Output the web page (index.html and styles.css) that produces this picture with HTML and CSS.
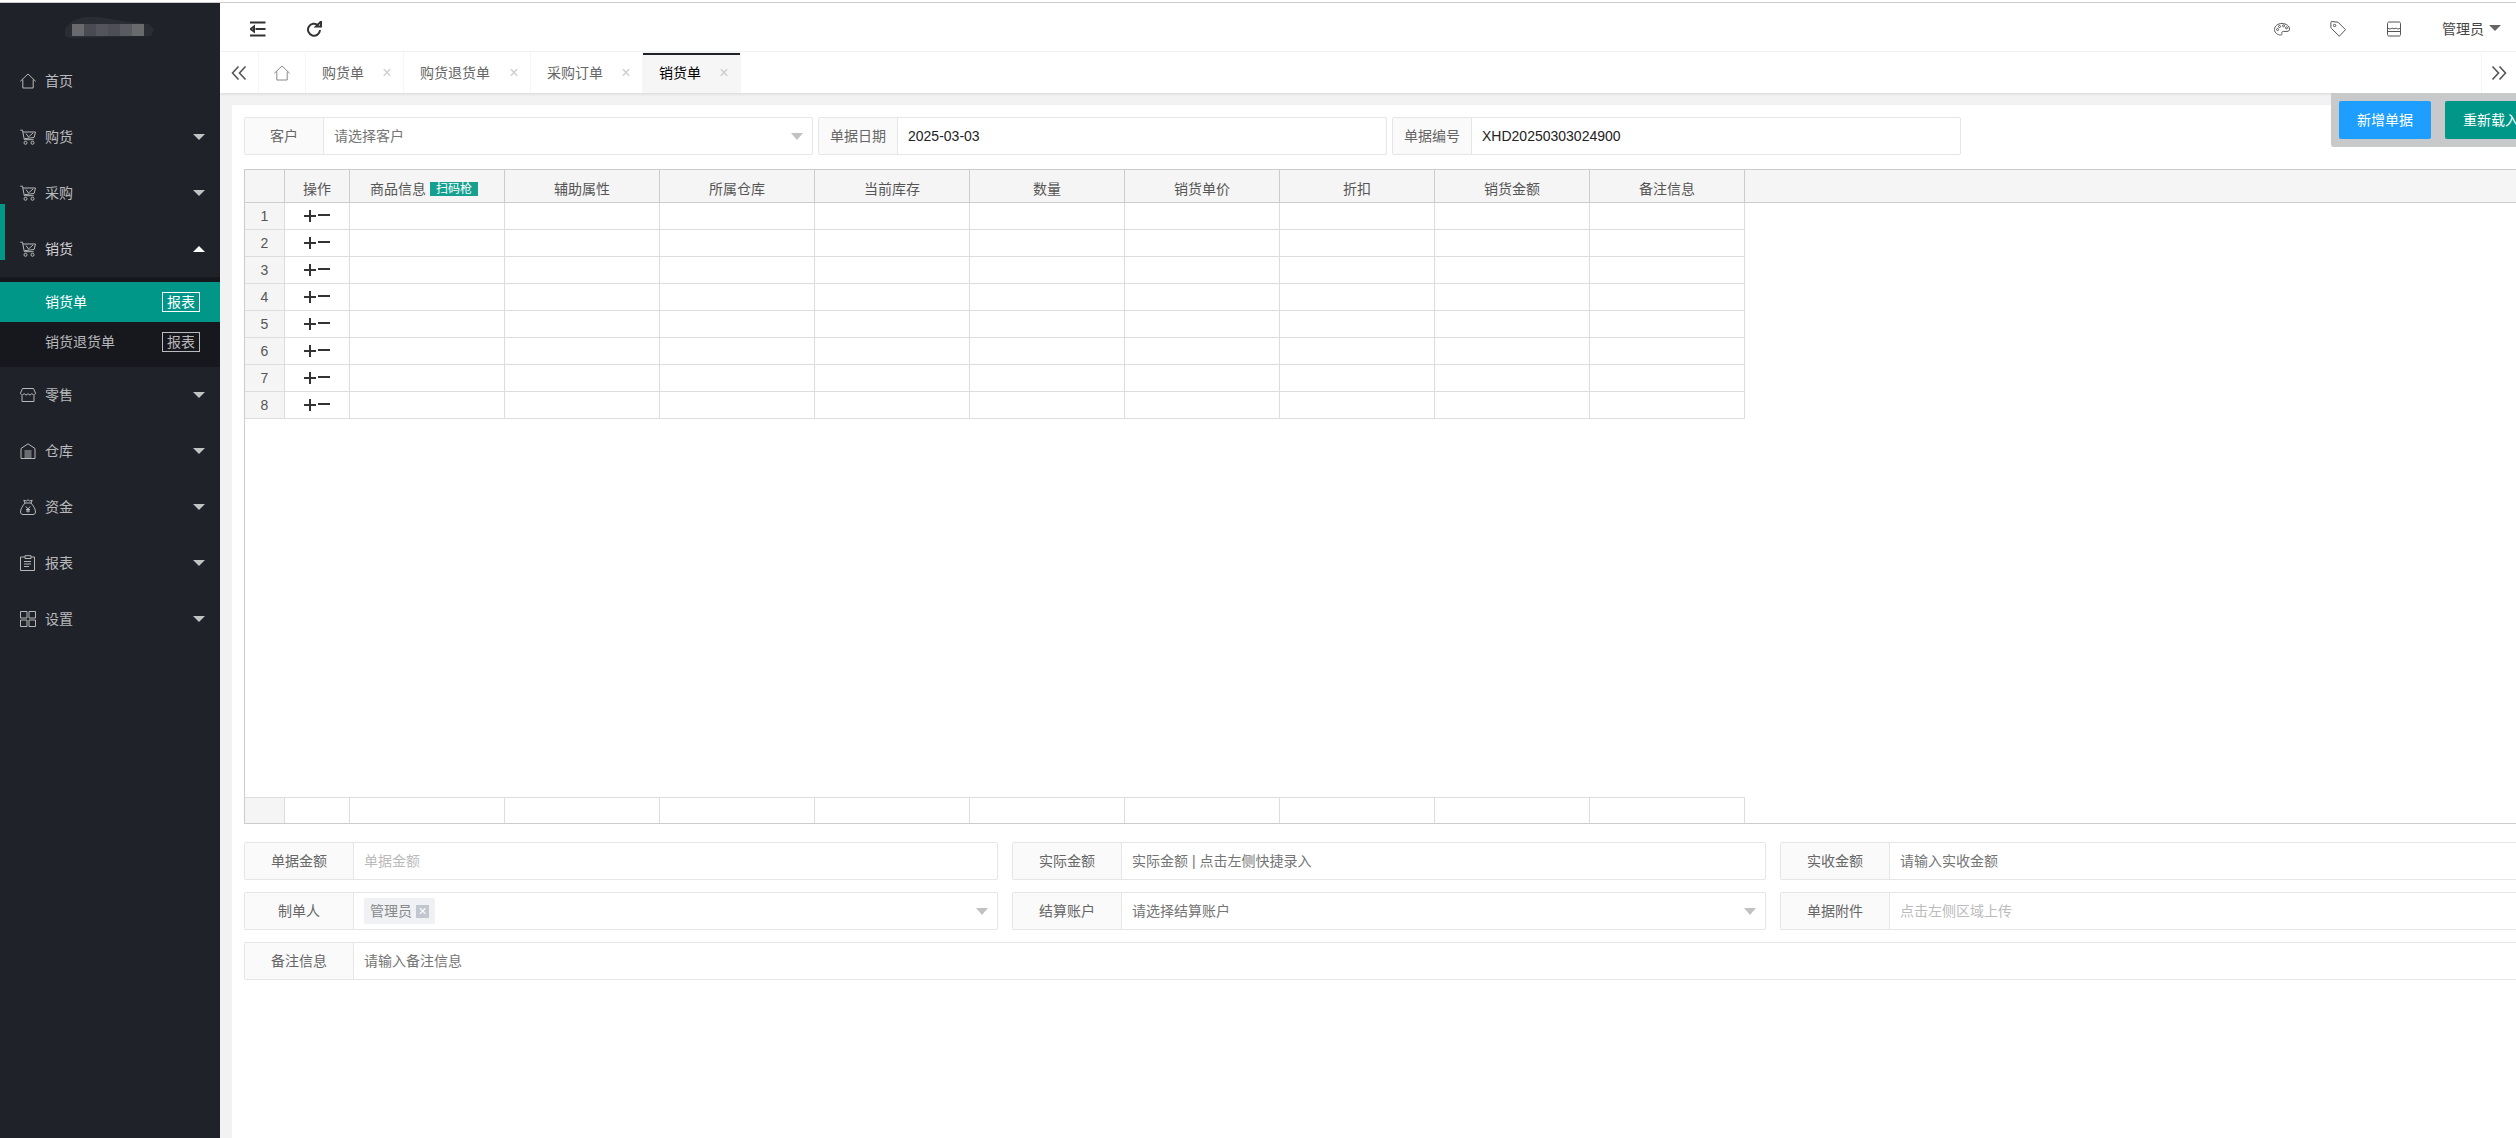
FILE: index.html
```html
<!DOCTYPE html>
<html lang="zh-CN">
<head>
<meta charset="utf-8">
<title>销货单</title>
<link rel="stylesheet" href="styles.css">
</head>
<body>
<svg class="defs" aria-hidden="true">
  <symbol id="i-home" viewBox="0 0 16 16"><path d="M.3 8.300 8 1l7.700 7.300M2.800 6.500V15h10.400V6.500"/></symbol>
  <symbol id="i-cart" viewBox="0 0 16 16"><path d="M.3 1.200h2.200l1.800 9.500h9.400M3 3h12.500l-1.400 5.500-9.600 1.200M6 4.500l2.500 3.500 4.500-4"/><circle cx="5.500" cy="13.800" r="1.500"/><circle cx="12.500" cy="13.800" r="1.500"/></symbol>
  <symbol id="i-shop" viewBox="0 0 16 16"><path d="M2.500 1.500h11l2 4.500c0 2.400-3 2.400-3.700.5-.7 1.900-3.100 1.900-3.800 0-.7 1.900-3.100 1.900-3.800 0C3.500 8.400.5 8.400.5 6zM2 8.500V14.500h12V8.500"/></symbol>
  <symbol id="i-shop-box" viewBox="0 0 16 16"><path d="M3 1h10c1 0 1.500 .6 1.500 1.500V13.500c0 1-.5 1.500-1.500 1.500H3c-1 0-1.500-.5-1.500-1.500V2.500C1.500 1.600 2 1 3 1zM1.500 7c2 1.500 3.500 1 4.500 0 1.300 1 2.700 1 4 0 1 1 2.500 1.500 4.500 0M1.500 10.500h13"/></symbol>
  <symbol id="i-house" viewBox="0 0 16 16"><path d="M8 .8 1 5.500V15.500h14V5.500zM4.500 8h7M4.500 10h7M4.500 12h7M4.500 14h7"/></symbol>
  <symbol id="i-bag" viewBox="0 0 16 16"><path d="M5 4 3.800 1.200 6.300 2 8 .8 9.700 2l2.500-.8L11 4zM5 4C2.500 7 .5 10 .5 13c0 1.500 1 2.500 2.500 2.500h10c1.500 0 2.500-1 2.500-2.500 0-3-2-6-4.500-9M5.800 7.500 8 10l2.200-2.500M8 10v3.500M6 10.500h4M6 12h4"/></symbol>
  <symbol id="i-report" viewBox="0 0 16 16"><path d="M5 2H.5v13.500h14V2H11M5 .7h6V3.500H5zM4 6.500h7M4 9h7M4 11.500h5"/></symbol>
  <symbol id="i-grid" viewBox="0 0 16 16"><path d="M.5.500h6.500v6.500H.5zM9 .5h6.500v6.500H9zM.5 9h6.500v6.500H.5zM9 9h6.500v6.500H9z"/></symbol>
  <symbol id="i-palette" viewBox="0 0 16 16"><path d="M8 2.500C3.800 2.500.5 5 .5 8.500s3.200 5.500 6 5.500c1.500 0 1.800-.8 1.400-1.600-.5-1.100.2-2 1.600-2h3.500c1.500 0 2.500-.7 2.500-2.200C15.500 5 12.200 2.500 8 2.500z"/><circle class="dot" cx="3.600" cy="8.500" r="1"/><circle class="dot" cx="5.500" cy="5.500" r="1"/><circle class="dot" cx="9.500" cy="4.800" r="1"/><circle class="dot" cx="12.500" cy="6.800" r="1"/></symbol>
  <symbol id="i-tag" viewBox="0 0 16 16"><path d="M1.800 .5 8 1.200l7.500 7.500-6.200 6.500L1.500 7.500C1 7 .9 6.600 .9 6V1.400c0-.6.300-.9.900-.9z"/><circle cx="4.600" cy="4.500" r="1.200"/></symbol>
  <symbol id="i-indent" viewBox="0 0 16 16"><path d="M0 1.500h15.500M5.500 8h10M0 14.500h15.500"/><path class="fill" d="M4 5.500v5L.5 8z"/></symbol>
  <symbol id="i-refresh" viewBox="0 0 16 16"><path d="M12 4.200A6 6 0 1 0 14 9"/><path class="fill" d="M10 5.500h5V.5z"/></symbol>
  <symbol id="i-left" viewBox="0 0 16 16"><path d="M7.500 1.500 1.500 8l6 6.500M14.500 1.500 8.500 8l6 6.500"/></symbol>
  <symbol id="i-right" viewBox="0 0 16 16"><path d="M1.500 1.500 7.500 8l-6 6.500M8.500 1.500l6 6.500-6 6.500"/></symbol>
  <symbol id="i-op" viewBox="0 0 26 12"><path d="M0 6h12M6 0v12M14 5h12"/></symbol>
</svg>

<div class="app">
  <aside class="sidebar">
    <div class="logo">
      <svg class="logo-art" viewBox="0 0 92 24" aria-hidden="true">
        <path class="logo-blob" d="M1 12 9 5 20 2h14l30 5 20 2 5 5-3 7-82 2-6-3z"/>
        <rect x="7" y="9" width="12" height="12" fill="#6a6a6e"/>
        <rect x="19" y="9" width="12" height="12" fill="#4a4b52"/>
        <rect x="31" y="9" width="12" height="12" fill="#54555b"/>
        <rect x="43" y="9" width="12" height="12" fill="#4e4f56"/>
        <rect x="55" y="9" width="12" height="12" fill="#5a5b60"/>
        <rect x="67" y="9" width="12" height="12" fill="#686a6c"/>
      </svg>
    </div>
    <nav class="menu">
      <span class="menu-bar"></span>
      <a class="menu-item"><svg class="ico"><use href="#i-home"/></svg><span>首页</span></a>
      <a class="menu-item"><svg class="ico"><use href="#i-cart"/></svg><span>购货</span><i class="caret"></i></a>
      <a class="menu-item"><svg class="ico"><use href="#i-cart"/></svg><span>采购</span><i class="caret"></i></a>
      <a class="menu-item is-open"><svg class="ico"><use href="#i-cart"/></svg><span>销货</span><i class="caret caret-up"></i></a>
      <div class="submenu">
        <a class="sub-item is-active"><span>销货单</span><b class="sub-badge">报表</b></a>
        <a class="sub-item"><span>销货退货单</span><b class="sub-badge">报表</b></a>
      </div>
      <a class="menu-item"><svg class="ico"><use href="#i-shop"/></svg><span>零售</span><i class="caret"></i></a>
      <a class="menu-item"><svg class="ico"><use href="#i-house"/></svg><span>仓库</span><i class="caret"></i></a>
      <a class="menu-item"><svg class="ico"><use href="#i-bag"/></svg><span>资金</span><i class="caret"></i></a>
      <a class="menu-item"><svg class="ico"><use href="#i-report"/></svg><span>报表</span><i class="caret"></i></a>
      <a class="menu-item"><svg class="ico"><use href="#i-grid"/></svg><span>设置</span><i class="caret"></i></a>
    </nav>
  </aside>

  <main class="main">
    <header class="topbar">
      <div class="top-left">
        <svg class="ico-dark"><use href="#i-indent"/></svg>
        <svg class="ico-dark"><use href="#i-refresh"/></svg>
      </div>
      <div class="top-right">
        <svg class="ico-thin"><use href="#i-palette"/></svg>
        <svg class="ico-thin"><use href="#i-tag"/></svg>
        <svg class="ico-thin"><use href="#i-shop-box"/></svg>
        <span class="user">管理员<i class="user-caret"></i></span>
      </div>
    </header>

    <div class="tabs">
      <div class="tab-btn tab-left"><svg class="ico-arrow"><use href="#i-left"/></svg></div>
      <div class="tab-btn tab-home"><svg class="ico-home"><use href="#i-home"/></svg></div>
      <div class="tab tab-3">购货单<span class="tab-x">×</span></div>
      <div class="tab tab-5">购货退货单<span class="tab-x">×</span></div>
      <div class="tab tab-4">采购订单<span class="tab-x">×</span></div>
      <div class="tab tab-3 is-current">销货单<span class="tab-x">×</span></div>
      <div class="tab-btn tab-right"><svg class="ico-arrow"><use href="#i-right"/></svg></div>
    </div>

    <div class="toolbox">
      <button class="btn btn-blue">新增单据</button>
      <button class="btn btn-green">重新载入</button>
    </div>

    <section class="card">
      <div class="form-top">
        <div class="field"><label class="lab lab-s">客户</label><div class="val val-ph">请选择客户<i class="sel"></i></div></div>
        <div class="field"><label class="lab lab-s">单据日期</label><div class="val val-dark">2025-03-03</div></div>
        <div class="field"><label class="lab lab-s">单据编号</label><div class="val val-dark">XHD20250303024900</div></div>
      </div>

      <div class="sheet">
        <div class="row head">
          <div class="cell num"></div><div class="cell">操作</div>
          <div class="cell cell-scan">商品信息<span class="scan">扫码枪</span></div>
          <div class="cell">辅助属性</div><div class="cell">所属仓库</div><div class="cell">当前库存</div>
          <div class="cell">数量</div><div class="cell">销货单价</div><div class="cell">折扣</div>
          <div class="cell">销货金额</div><div class="cell">备注信息</div>
        </div>
        <div class="row body-row"><div class="cell num">1</div><div class="cell"><svg class="op"><use href="#i-op"/></svg></div><div class="cell"></div><div class="cell"></div><div class="cell"></div><div class="cell"></div><div class="cell"></div><div class="cell"></div><div class="cell"></div><div class="cell"></div><div class="cell"></div></div>
        <div class="row body-row"><div class="cell num">2</div><div class="cell"><svg class="op"><use href="#i-op"/></svg></div><div class="cell"></div><div class="cell"></div><div class="cell"></div><div class="cell"></div><div class="cell"></div><div class="cell"></div><div class="cell"></div><div class="cell"></div><div class="cell"></div></div>
        <div class="row body-row"><div class="cell num">3</div><div class="cell"><svg class="op"><use href="#i-op"/></svg></div><div class="cell"></div><div class="cell"></div><div class="cell"></div><div class="cell"></div><div class="cell"></div><div class="cell"></div><div class="cell"></div><div class="cell"></div><div class="cell"></div></div>
        <div class="row body-row"><div class="cell num">4</div><div class="cell"><svg class="op"><use href="#i-op"/></svg></div><div class="cell"></div><div class="cell"></div><div class="cell"></div><div class="cell"></div><div class="cell"></div><div class="cell"></div><div class="cell"></div><div class="cell"></div><div class="cell"></div></div>
        <div class="row body-row"><div class="cell num">5</div><div class="cell"><svg class="op"><use href="#i-op"/></svg></div><div class="cell"></div><div class="cell"></div><div class="cell"></div><div class="cell"></div><div class="cell"></div><div class="cell"></div><div class="cell"></div><div class="cell"></div><div class="cell"></div></div>
        <div class="row body-row"><div class="cell num">6</div><div class="cell"><svg class="op"><use href="#i-op"/></svg></div><div class="cell"></div><div class="cell"></div><div class="cell"></div><div class="cell"></div><div class="cell"></div><div class="cell"></div><div class="cell"></div><div class="cell"></div><div class="cell"></div></div>
        <div class="row body-row"><div class="cell num">7</div><div class="cell"><svg class="op"><use href="#i-op"/></svg></div><div class="cell"></div><div class="cell"></div><div class="cell"></div><div class="cell"></div><div class="cell"></div><div class="cell"></div><div class="cell"></div><div class="cell"></div><div class="cell"></div></div>
        <div class="row body-row"><div class="cell num">8</div><div class="cell"><svg class="op"><use href="#i-op"/></svg></div><div class="cell"></div><div class="cell"></div><div class="cell"></div><div class="cell"></div><div class="cell"></div><div class="cell"></div><div class="cell"></div><div class="cell"></div><div class="cell"></div></div>
        <div class="sheet-space"></div>
        <div class="row foot"><div class="cell num"></div><div class="cell"></div><div class="cell"></div><div class="cell"></div><div class="cell"></div><div class="cell"></div><div class="cell"></div><div class="cell"></div><div class="cell"></div><div class="cell"></div><div class="cell"></div></div>
      </div>

      <div class="form-bottom">
        <div class="field"><label class="lab">单据金额</label><div class="val val-light">单据金额</div></div>
        <div class="field"><label class="lab">实际金额</label><div class="val val-ph">实际金额 | 点击左侧快捷录入</div></div>
        <div class="field"><label class="lab">实收金额</label><div class="val val-ph">请输入实收金额</div></div>
        <div class="field"><label class="lab">制单人</label><div class="val"><span class="chip">管理员<span class="chip-x">×</span></span><i class="sel"></i></div></div>
        <div class="field"><label class="lab">结算账户</label><div class="val val-ph">请选择结算账户<i class="sel"></i></div></div>
        <div class="field"><label class="lab">单据附件</label><div class="val val-light">点击左侧区域上传</div></div>
        <div class="field field-wide"><label class="lab">备注信息</label><div class="val val-ph">请输入备注信息</div></div>
      </div>
    </section>
  </main>
</div>
</body>
</html>
```

FILE: styles.css
```css
* { box-sizing: border-box; }
html, body { margin: 0; height: 100%; overflow: hidden; }
body {
  font-family: "Liberation Sans", "Noto Sans CJK SC", sans-serif;
  font-size: 14px;
  color: #333;
  background: #fff;
  padding-top: 2px;
}
.defs { display: none; }

.app {
  display: flex;
  height: 1136px;
  border-top: 1px solid #ccc;
}

/* sidebar */
.sidebar {
  flex: 0 0 220px;
  background: #20222a;
  color: rgba(255, 255, 255, .7);
}
.logo { height: 50px; padding: 12px 0 0 65px; }
.logo-art { display: block; width: 92px; height: 24px; }
.logo-blob { fill: #2b2d34; }
.menu { position: relative; }
.menu-bar {
  position: absolute;
  left: 0;
  top: 151px;
  width: 5px;
  height: 56px;
  background: #009688;
}
.menu-item {
  display: flex;
  align-items: center;
  height: 56px;
  padding-left: 20px;
  position: relative;
}
.menu-item > span, .sub-item > span { padding-bottom: 2px; }
.menu-item.is-open { color: rgba(255, 255, 255, .8); }
.ico {
  width: 16px;
  height: 16px;
  margin-right: 9px;
  fill: none;
  stroke: #b8b8b8;
  stroke-width: 1;
}
.caret {
  margin-left: auto;
  margin-right: 15px;
  width: 0;
  height: 0;
  border-left: 6px solid transparent;
  border-right: 6px solid transparent;
  border-top: 6px solid #c2c2c2;
}
.caret-up {
  border-top: 0;
  border-bottom: 6px solid #fff;
}
.submenu {
  background: #17181e;
  padding: 5px 0;
}
.sub-item {
  display: flex;
  align-items: center;
  justify-content: space-between;
  height: 40px;
  padding: 0 20px 0 45px;
}
.sub-item.is-active { background: #009688; color: #fff; }
.sub-badge {
  display: block;
  width: 38px;
  height: 20px;
  font-weight: 400;
  line-height: 18px;
  text-align: center;
  border: 1px solid currentColor;
}

/* main */
.main {
  flex: 1;
  min-width: 0;
  position: relative;
  display: flex;
  flex-direction: column;
  background: #f2f2f2;
  overflow: hidden;
}
.topbar {
  flex: 0 0 49px;
  display: flex;
  align-items: center;
  justify-content: space-between;
  background: #fff;
  border-bottom: 1px solid #f6f6f6;
  padding: 4px 15px 0 30px;
}
.top-left { display: flex; align-items: center; gap: 40px; }
.ico-dark {
  width: 16px;
  height: 16px;
  fill: none;
  stroke: #333;
  stroke-width: 2;
}
.ico-dark .fill { fill: #333; stroke: none; }
.top-right { display: flex; align-items: center; gap: 40px; }
.ico-thin {
  width: 16px;
  height: 16px;
  fill: none;
  stroke: #555;
  stroke-width: 1;
}
.ico-thin .dot { fill: #555; stroke: none; }
.user { display: flex; align-items: center; color: #444; padding-bottom: 3px; }
.user-caret {
  margin-left: 5px;
  width: 0;
  height: 0;
  border-left: 6px solid transparent;
  border-right: 6px solid transparent;
  border-top: 6px solid #666;
}

.tabs {
  flex: 0 0 41px;
  display: flex;
  background: #fff;
  box-shadow: 0 1px 3px rgba(0, 0, 0, .12);
  position: relative;
}
.tab-btn {
  display: flex;
  align-items: center;
  justify-content: center;
  border-right: 1px solid #f6f6f6;
}
.tab-left { width: 39px; }
.tab-home { width: 47px; }
.tab-right {
  margin-left: auto;
  width: 35px;
  border-right: 0;
  border-left: 1px solid #f6f6f6;
}
.ico-arrow { width: 16px; height: 16px; fill: none; stroke: #555; stroke-width: 1.600; }
.ico-home { width: 16px; height: 16px; fill: none; stroke: #888; stroke-width: 1; }
.tab {
  display: flex;
  align-items: center;
  padding: 0 0 2px 16px;
  color: #666;
  border-right: 1px solid #f6f6f6;
  position: relative;
}
.tab-3 { width: 98px; }
.tab-5 { width: 127px; }
.tab-4 { width: 112px; }
.tab.is-current { background: #f6f6f6; color: #000; }
.tab.is-current::before {
  content: "";
  position: absolute;
  left: 0;
  right: 0;
  top: 1px;
  height: 2px;
  background: #20222a;
}
.tab-x {
  position: absolute;
  right: 9px;
  top: 11px;
  width: 14px;
  text-align: center;
  font-size: 16px;
  line-height: 20px;
  color: #ccc;
}

.toolbox {
  position: absolute;
  top: 90px;
  left: 2111px;
  width: 300px;
  height: 54px;
  display: flex;
  gap: 14px;
  padding: 8px;
  background: #c8c9cb;
  border-bottom-left-radius: 3px;
  z-index: 2;
}
.btn {
  flex: 0 0 92px;
  height: 38px;
  border: 0;
  border-radius: 2px;
  color: #fff;
  font: inherit;
  padding: 0 0 2px;
}
.btn-blue { background: #1e9fff; }
.btn-green { background: #009688; }

.card {
  flex: 1;
  margin: 12px 0 0 12px;
  padding: 12px 0 0 12px;
  background: #fff;
  width: 2400px;
}
.form-top { display: flex; gap: 5px; }
.form-top .field { flex: 0 0 569px; }
.field {
  display: flex;
  height: 38px;
  border: 1px solid #e6e6e6;
  border-radius: 2px;
}
.lab {
  flex: 0 0 109px;
  display: flex;
  align-items: center;
  justify-content: center;
  padding-bottom: 2px;
  background: #fafafa;
  border-right: 1px solid #e6e6e6;
  color: #666;
}
.lab-s { flex-basis: 79px; }
.val {
  flex: 1;
  display: flex;
  align-items: center;
  padding: 0 0 2px 10px;
  position: relative;
}
.val-ph { color: #757575; }
.val-light { color: #bbb; }
.val-dark { color: #222; padding-bottom: 0; }
.sel {
  position: absolute;
  right: 9px;
  top: 15px;
  width: 0;
  height: 0;
  border-left: 6px solid transparent;
  border-right: 6px solid transparent;
  border-top: 7px solid #c2c2c2;
}
.chip {
  display: flex;
  align-items: center;
  height: 26px;
  margin-top: 2px;
  padding: 0 6px 2px;
  gap: 4px;
  background: #eff1f5;
  border-radius: 2px;
  color: #888;
}
.chip-x {
  width: 13px;
  height: 13px;
  margin-top: 2px;
  background: #c2c6cf;
  color: #fff;
  font-size: 14px;
  line-height: 13px;
  text-align: center;
}

/* sheet */
.sheet {
  margin-top: 14px;
  height: 655px;
  display: flex;
  flex-direction: column;
  border: 1px solid #ccc;
  border-width: 1px 0 1px 1px;
}
.sheet-space { flex: 1; }
.row {
  display: grid;
  grid-template-columns: 40px 65px repeat(9, 155px);
}
.cell {
  display: flex;
  align-items: center;
  justify-content: center;
  border-right: 1px solid #ddd;
  border-bottom: 1px solid #ddd;
  color: #555;
}
.head {
  flex: 0 0 33px;
  background: #f5f5f5;
  border-bottom: 1px solid #ccc;
}
.head .cell { border-bottom: 0; border-right-color: #ccc; padding-top: 4px; }
.head .cell-scan { padding-right: 6px; }
.body-row { flex: 0 0 27px; }
.num { background: #f5f5f5; }
.foot { flex: 0 0 26px; }
.foot .cell { border-top: 1px solid #ddd; border-bottom: 0; }
.op {
  width: 26px;
  height: 12px;
  fill: none;
  stroke: #333;
  stroke-width: 2;
}
.scan {
  margin: 2px 0 0 4px;
  width: 48px;
  height: 14px;
  background: #16a090;
  color: #fff;
  font-size: 12px;
  line-height: 14px;
  text-align: center;
}

.form-bottom {
  margin-top: 18px;
  display: grid;
  grid-template-columns: repeat(3, 754px);
  gap: 12px 14px;
}
.field-wide { grid-column: 1 / -1; }
```
